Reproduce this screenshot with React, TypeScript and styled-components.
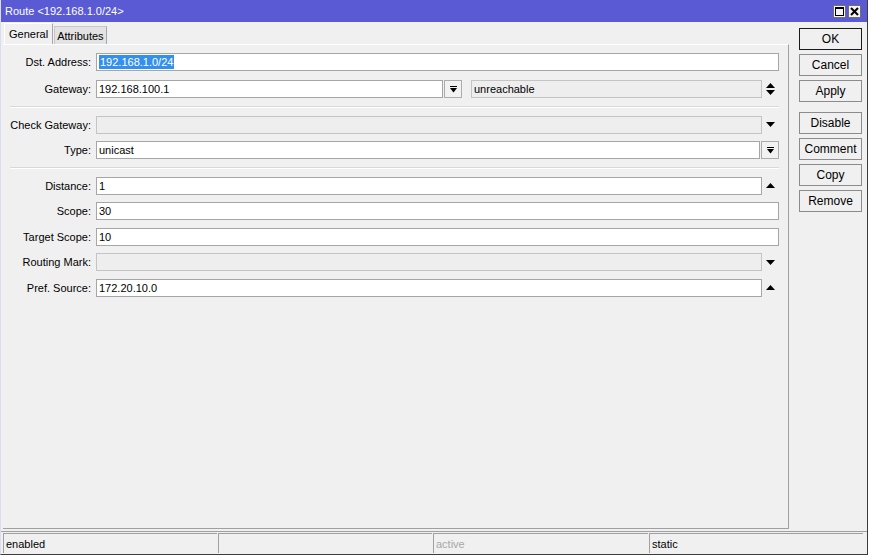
import * as React from "react";
import styled, { createGlobalStyle } from "styled-components";

const GlobalStyle = createGlobalStyle`
  html, body {
    margin: 0;
    padding: 0;
    background: #ffffff;
  }
  body {
    font-family: "Liberation Sans", Arial, sans-serif;
    font-size: 11px;
    color: #000;
  }
`;

const SWindow = styled.div`
  width: 868px;
  height: 555px;
  box-sizing: border-box;
  display: flex;
  flex-direction: column;
  background: #f0f0f0;
  border-left: 1px solid #dcdcf0;
  border-right: 1px solid #3c3c3c;
  border-bottom: 1px solid #3c3c3c;
`;

const STitleBar = styled.div`
  height: 22px;
  flex: none;
  display: flex;
  align-items: center;
  justify-content: space-between;
  padding: 0 6px 0 4px;
  background: #5a5ad4;
  color: #fff;
  font-size: 11px;
`;

const STitleButtons = styled.div`
  display: flex;
  gap: 2px;
`;

const STitleButton = styled.div`
  width: 13px;
  height: 13px;
  box-sizing: border-box;
  background: #f4f4f4;
  border: 1px solid #707070;
  display: flex;
  align-items: center;
  justify-content: center;
`;

const SBody = styled.div`
  flex: 1;
  display: flex;
  min-height: 0;
`;

const SLeft = styled.div`
  width: 788px;
  display: flex;
  flex-direction: column;
  padding-left: 2px;
  box-sizing: border-box;
`;

const STabs = styled.div`
  height: 22px;
  display: flex;
  align-items: flex-end;
  padding-left: 1px;
`;

const STab = styled.div<{ $active?: boolean }>`
  height: ${(p) => (p.$active ? "21px" : "18px")};
  box-sizing: border-box;
  padding: 0 ${(p) => (p.$active ? "4px" : "2px")};
  display: flex;
  align-items: center;
  background: ${(p) => (p.$active ? "#f0f0f0" : "#e3e3e3")};
  border-top: 1px solid ${(p) => (p.$active ? "#ffffff" : "#c8c8c8")};
  border-left: 1px solid ${(p) => (p.$active ? "#ffffff" : "#c8c8c8")};
  border-right: 1px solid #a8a8a8;
  margin-left: ${(p) => (p.$active ? "0" : "1px")};
`;

const SPanel = styled.div`
  flex: 1;
  box-sizing: border-box;
  border-top: 1px solid #ffffff;
  border-right: 1px solid #a0a0a0;
  border-bottom: 1px solid #a0a0a0;
  margin-bottom: 2px;
  padding: 8px 9px 0 0;
`;

const SRow = styled.div<{ $after?: number }>`
  display: grid;
  grid-template-columns: 88px 1fr;
  column-gap: 5px;
  height: 18px;
  margin-bottom: ${(p) => p.$after ?? 7.5}px;
  align-items: center;
`;

const SLabel = styled.div`
  text-align: right;
  white-space: nowrap;
`;

const SFieldArea = styled.div`
  display: flex;
  height: 100%;
  align-items: stretch;
`;

const SInput = styled.div<{ $disabled?: boolean; $width?: number }>`
  flex: ${(p) => (p.$width ? "none" : "1")};
  width: ${(p) => (p.$width ? `${p.$width}px` : "auto")};
  box-sizing: border-box;
  border: 1px solid ${(p) => (p.$disabled ? "#c4c4c4" : "#a6a6a6")};
  background: ${(p) => (p.$disabled ? "#eeeeee" : "#ffffff")};
  color: #000;
  display: flex;
  align-items: center;
  padding-left: 2px;
  white-space: nowrap;
  overflow: hidden;
`;

const SSelected = styled.span`
  background: #3390ec;
  color: #fff;
  padding: 1px 1px;
`;

const SSideArrow = styled.div`
  width: 17px;
  flex: none;
  display: flex;
  align-items: center;
  justify-content: center;
`;

const SDropButton = styled.div`
  width: 18px;
  flex: none;
  box-sizing: border-box;
  border: 1px solid #acacac;
  background: #f2f2f2;
  margin-left: 1px;
  display: flex;
  align-items: center;
  justify-content: center;
`;

const SSeparator = styled.div<{ $top: number }>`
  margin: ${(p) => p.$top}px 0 8px 7px;
  height: 1px;
  background: #d9d9d9;
  border-bottom: 1px solid #ffffff;
`;

const SButtons = styled.div`
  width: 63px;
  margin-left: 10px;
  padding-top: 6px;
  display: flex;
  flex-direction: column;
  gap: 4px;
`;

const SButton = styled.div<{ $default?: boolean; $spaced?: boolean }>`
  height: 22px;
  box-sizing: border-box;
  border: 1px solid ${(p) => (p.$default ? "#1a1a1a" : "#8c8c8c")};
  background: #f0f0f0;
  display: flex;
  align-items: center;
  justify-content: center;
  font-size: 12px;
  margin-top: ${(p) => (p.$spaced ? "6px" : "0")};
`;

const SStatusBar = styled.div`
  height: 23px;
  flex: none;
  box-sizing: border-box;
  border-top: 1px solid #a0a0a0;
  display: grid;
  grid-template-columns: 214px 214px 215px 1fr;
  gap: 1px;
  padding: 0 4px 1px 2px;
`;

const SStatusCell = styled.div<{ $dim?: boolean }>`
  border-top: 1px solid #a0a0a0;
  border-left: 1px solid #a0a0a0;
  margin-top: 1px;
  padding-left: 2px;
  display: flex;
  align-items: center;
  color: ${(p) => (p.$dim ? "#a8a8a8" : "#000")};
`;

const Tri = ({ dir }: { dir: "up" | "down" }) => (
  <svg width="9" height="5" viewBox="0 0 9 5">
    {dir === "up" ? (
      <polygon points="0,5 9,5 4.5,0" fill="#000" />
    ) : (
      <polygon points="0,0 9,0 4.5,5" fill="#000" />
    )}
  </svg>
);

const UpDown = () => (
  <svg width="9" height="12" viewBox="0 0 9 12">
    <polygon points="0,5 9,5 4.5,0" fill="#000" />
    <polygon points="0,7 9,7 4.5,12" fill="#000" />
  </svg>
);

const DropIcon = () => (
  <svg width="7" height="7" viewBox="0 0 7 7">
    <rect x="0" y="0" width="7" height="1" fill="#000" />
    <polygon points="0,2 7,2 3.5,6.5" fill="#000" />
  </svg>
);

type Side = "none" | "up" | "down" | "drop";

const Field = (props: {
  label: string;
  value?: React.ReactNode;
  disabled?: boolean;
  side?: Side;
  after?: number;
}) => {
  const { label, value, disabled, side = "none", after } = props;
  return (
    <SRow $after={after}>
      <SLabel>{label}:</SLabel>
      <SFieldArea>
        <SInput $disabled={disabled}>{value}</SInput>
        {side === "up" && (
          <SSideArrow>
            <Tri dir="up" />
          </SSideArrow>
        )}
        {side === "down" && (
          <SSideArrow>
            <Tri dir="down" />
          </SSideArrow>
        )}
        {side === "drop" && (
          <SDropButton>
            <DropIcon />
          </SDropButton>
        )}
      </SFieldArea>
    </SRow>
  );
};

const App = () => {
  return (
    <>
      <GlobalStyle />
      <SWindow>
        <STitleBar>
          <span>Route &lt;192.168.1.0/24&gt;</span>
          <STitleButtons>
            <STitleButton>
              <svg width="9" height="9" viewBox="0 0 9 9">
                <rect x="0.5" y="0.5" width="8" height="8" fill="none" stroke="#000" />
                <rect x="0" y="0" width="9" height="2" fill="#000" />
              </svg>
            </STitleButton>
            <STitleButton>
              <svg width="9" height="9" viewBox="0 0 9 9">
                <path d="M1 1 L8 8 M8 1 L1 8" stroke="#000" strokeWidth="2" />
              </svg>
            </STitleButton>
          </STitleButtons>
        </STitleBar>
        <SBody>
          <SLeft>
            <STabs>
              <STab $active>General</STab>
              <STab>Attributes</STab>
            </STabs>
            <SPanel>
              <Field
                label="Dst. Address"
                value={<SSelected>192.168.1.0/24</SSelected>}
                after={9}
              />
              <SRow>
                <SLabel>Gateway:</SLabel>
                <SFieldArea>
                  <SInput $width={347}>192.168.100.1</SInput>
                  <SDropButton>
                    <DropIcon />
                  </SDropButton>
                  <SInput $disabled style={{ marginLeft: 9 }}>
                    unreachable
                  </SInput>
                  <SSideArrow>
                    <UpDown />
                  </SSideArrow>
                </SFieldArea>
              </SRow>
              <SSeparator $top={1.5} />
              <Field label="Check Gateway" disabled side="down" />
              <Field label="Type" value="unicast" side="drop" />
              <SSeparator $top={0} />
              <Field label="Distance" value="1" side="up" />
              <Field label="Scope" value="30" />
              <Field label="Target Scope" value="10" />
              <Field label="Routing Mark" disabled side="down" />
              <Field label="Pref. Source" value="172.20.10.0" side="up" />
            </SPanel>
          </SLeft>
          <SButtons>
            <SButton $default>OK</SButton>
            <SButton>Cancel</SButton>
            <SButton>Apply</SButton>
            <SButton $spaced>Disable</SButton>
            <SButton>Comment</SButton>
            <SButton>Copy</SButton>
            <SButton>Remove</SButton>
          </SButtons>
        </SBody>
        <SStatusBar>
          <SStatusCell>enabled</SStatusCell>
          <SStatusCell />
          <SStatusCell $dim>active</SStatusCell>
          <SStatusCell>static</SStatusCell>
        </SStatusBar>
      </SWindow>
    </>
  );
};

export default App;
